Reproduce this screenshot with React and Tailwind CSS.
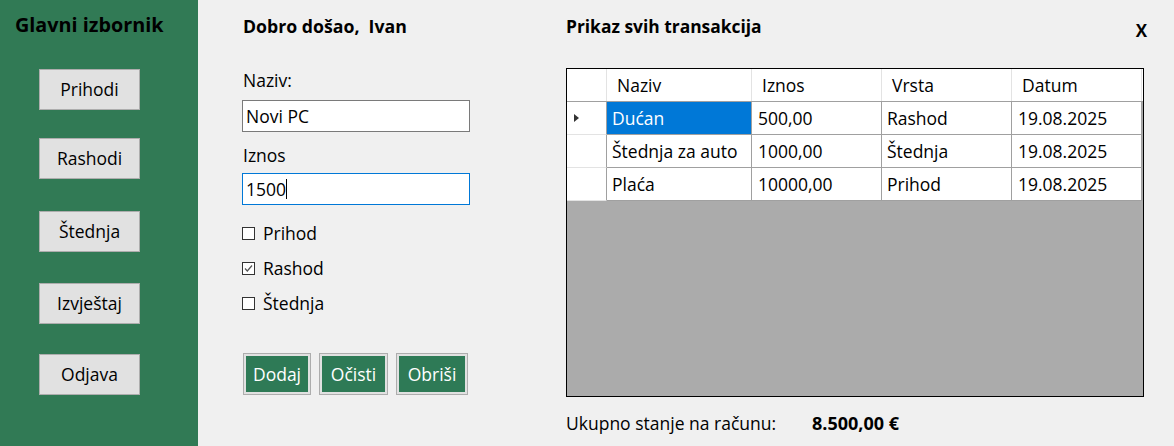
import React from 'react';

const font = { fontFamily: '"Open Sans", "Noto Sans", sans-serif' };

const menu = [
    { label: 'Prihodi', mt: 'mt-[32px]' },
    { label: 'Rashodi', mt: 'mt-[28px]' },
    { label: 'Štednja', mt: 'mt-[32px]' },
    { label: 'Izvještaj', mt: 'mt-[31px]' },
    { label: 'Odjava', mt: 'mt-[30px]' },
];

const rows = [
    { naziv: 'Dućan', iznos: '500,00', vrsta: 'Rashod', datum: '19.08.2025', selected: true },
    { naziv: 'Štednja za auto', iznos: '1000,00', vrsta: 'Štednja', datum: '19.08.2025' },
    { naziv: 'Plaća', iznos: '10000,00', vrsta: 'Prihod', datum: '19.08.2025' },
];

const Checkbox = ({ label, checked }) => (
    <div className="flex items-center h-[20px]">
        <span className="w-[13px] h-[13px] border border-[#333] bg-white flex items-center justify-center">
            {checked && (
                <svg width="11" height="11" viewBox="0 0 11 11">
                    <path d="M2 5.5 L4.3 8 L9 2.5" fill="none" stroke="#555" strokeWidth="1.2" />
                </svg>
            )}
        </span>
        <span className="ml-[8px] text-[17.5px] text-black">{label}</span>
    </div>
);

const ActionButton = ({ children }) => (
    <button className="flex-1 h-[42px] border border-[#adadad] bg-[#e1e1e1] p-[2px] flex">
        <span className="flex-1 bg-[#2e7a56] text-white text-[17.5px] flex items-center justify-center">
            {children}
        </span>
    </button>
);

export default function App() {
    return (
        <div className="flex w-[1174px] h-[446px] bg-[#f0f0f0] overflow-hidden text-black" style={font}>
            {/* Sidebar */}
            <div className="w-[198px] h-full bg-[#317a55] flex flex-col">
                <h1 className="ml-[15px] mt-[12px] h-[25px] leading-[25px] text-[19.8px] font-bold text-black">
                    Glavni izbornik
                </h1>
                {menu.map((m) => (
                    <button
                        key={m.label}
                        className={`${m.mt} ml-[39px] w-[101px] h-[41px] bg-[#e1e1e1] border border-[#adadad] text-[17.5px] text-black`}
                    >
                        {m.label}
                    </button>
                ))}
            </div>

            {/* Form */}
            <div className="ml-[44px] w-[228px] flex flex-col">
                <div className="mt-[15px] h-[22px] leading-[22px] text-[17.7px] font-bold ml-[1px]">
                    Dobro došao,&nbsp; Ivan
                </div>
                <div className="mt-[32px] h-[22px] leading-[22px] text-[17.5px] ml-[1px]">Naziv:</div>
                <div className="mt-[9px] h-[32px] bg-white border border-[#7a7a7a] flex items-center px-[3px] text-[17.5px]">
                    Novi PC
                </div>
                <div className="mt-[12px] h-[22px] leading-[22px] text-[17.5px] ml-[1px]">Iznos</div>
                <div className="mt-[7px] h-[32px] bg-white border border-[#0078d7] flex items-center px-[3px] text-[17.5px]">
                    1500<span className="w-[1px] h-[20px] bg-black" />
                </div>
                <div className="mt-[18px] flex flex-col gap-[15px]">
                    <Checkbox label="Prihod" />
                    <Checkbox label="Rashod" checked />
                    <Checkbox label="Štednja" />
                </div>
                <div className="mt-[40px] ml-[1px] flex gap-[8px]">
                    <div className="w-[68px] flex"><ActionButton>Dodaj</ActionButton></div>
                    <div className="w-[69px] flex"><ActionButton>Očisti</ActionButton></div>
                    <div className="w-[72px] flex"><ActionButton>Obriši</ActionButton></div>
                </div>
            </div>

            {/* Transactions */}
            <div className="ml-[96px] w-[578px] flex flex-col">
                <div className="flex justify-between">
                    <div className="mt-[15px] h-[22px] leading-[22px] text-[17.4px] font-bold">
                        Prikaz svih transakcija
                    </div>
                    <div className="mt-[20px] mr-[-3px] h-[22px] leading-[22px] text-[17px] font-bold">X</div>
                </div>
                <div className="mt-[26px] h-[329px] border border-black bg-[#ababab] flex flex-col text-[17.5px]">
                    <div className="flex h-[33px] bg-white border-b border-[#a0a0a0]">
                        <div className="w-[40px] border-r border-[#e3e3e3]" />
                        <div className="w-[145px] border-r border-[#e3e3e3] pl-[10px] flex items-center">Naziv</div>
                        <div className="w-[130px] border-r border-[#e3e3e3] pl-[10px] flex items-center">Iznos</div>
                        <div className="w-[130px] border-r border-[#e3e3e3] pl-[10px] flex items-center">Vrsta</div>
                        <div className="w-[130px] border-r border-[#e3e3e3] pl-[10px] flex items-center">Datum</div>
                    </div>
                    {rows.map((r) => (
                        <div key={r.naziv} className="flex h-[33px]">
                            <div className="w-[40px] bg-white border-b border-[#e3e3e3] border-r border-r-[#a0a0a0] flex items-center pl-[7px]">
                                {r.selected && (
                                    <svg width="6" height="10" viewBox="0 0 6 10">
                                        <path d="M0 1 L5 5 L0 9 Z" fill="#333" />
                                    </svg>
                                )}
                            </div>
                            <div
                                className={`w-[145px] border-b border-r border-[#a0a0a0] pl-[5px] flex items-center ${
                                    r.selected ? 'bg-[#0078d7] text-white' : 'bg-white'
                                }`}
                            >
                                {r.naziv}
                            </div>
                            <div className="w-[130px] bg-white border-b border-r border-[#a0a0a0] pl-[6px] flex items-center">{r.iznos}</div>
                            <div className="w-[130px] bg-white border-b border-r border-[#a0a0a0] pl-[5px] flex items-center">{r.vrsta}</div>
                            <div className="w-[130px] bg-white border-b border-r border-[#a0a0a0] pl-[6px] flex items-center">{r.datum}</div>
                        </div>
                    ))}
                </div>
                <div className="mt-[14px] flex text-[17.5px] h-[24px] leading-[24px]">
                    <span className="w-[246px]">Ukupno stanje na računu:</span>
                    <span className="font-bold text-[18px]">8.500,00 €</span>
                </div>
            </div>
        </div>
    );
}
